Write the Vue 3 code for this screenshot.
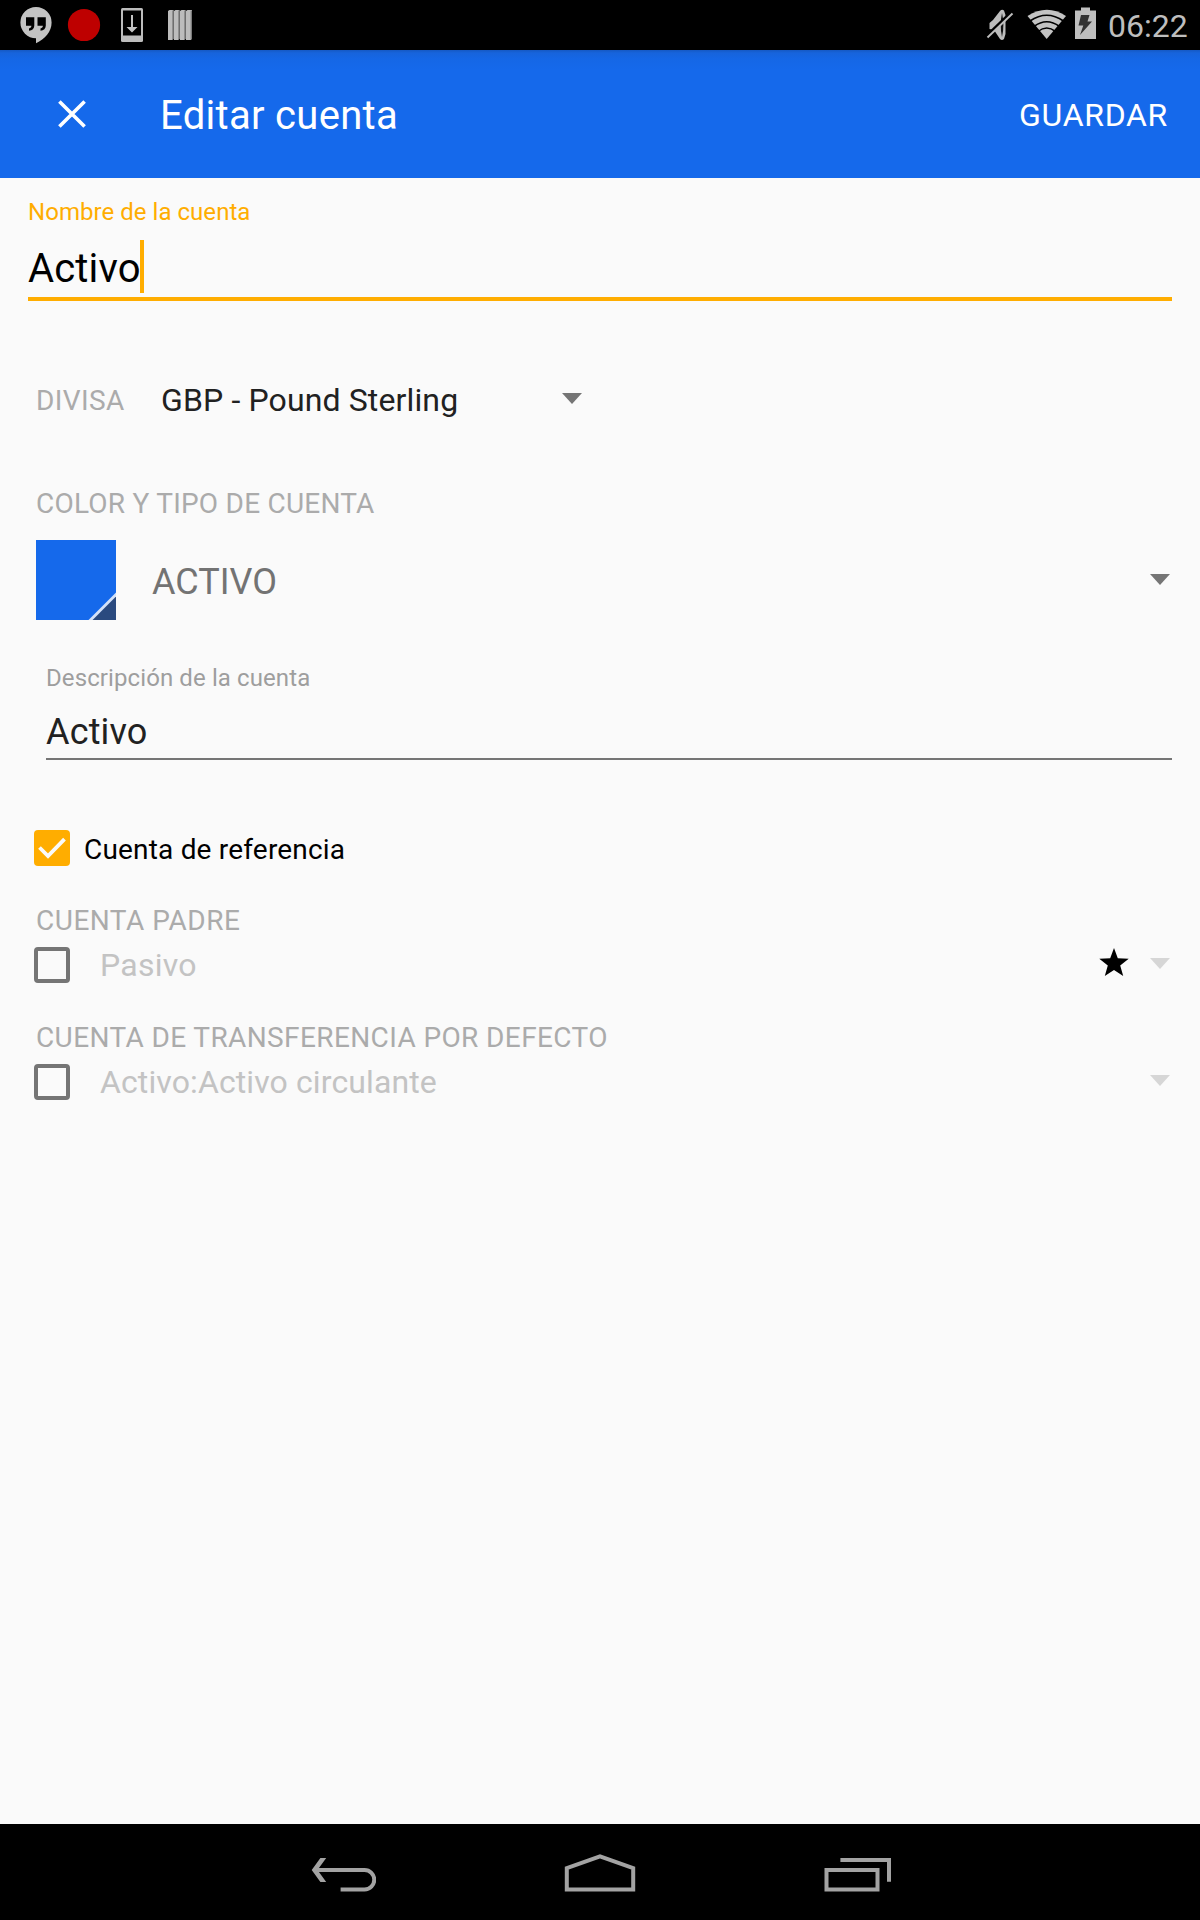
<script setup>
import { ref } from 'vue'

const accountName = ref('Activo')
const description = ref('Activo')
const currency = ref('GBP - Pound Sterling')
const accountType = ref('ACTIVO')
const parentAccount = ref('Pasivo')
const transferAccount = ref('Activo:Activo circulante')
</script>

<template>
  <div class="screen">
    <div class="status">
      <svg class="left-icons" width="200" height="50" viewBox="0 0 200 50">
        <!-- chat bubble with quotes -->
        <path d="M36 7a15.6 15.6 0 0 0 0 31.200v5C45 39 51.600 32 51.600 22.600A15.600 15.600 0 0 0 36 7z" fill="#c3c3c3" />
        <path d="M26 17.300h8.300v8.200c0 3-2 5-5.300 5.300v-2.400c1.600-.3 2.300-1.200 2.400-2.600H26zM37.500 17.300h8.300v8.200c0 3-2 5-5.300 5.300v-2.400c1.600-.3 2.300-1.200 2.400-2.600h-5.400z" fill="#000" />
        <circle cx="84" cy="25" r="16.100" fill="#be0000" />
        <!-- device download -->
        <rect x="121" y="8" width="22" height="34" rx="1.500" fill="#bdbdbd" />
        <rect x="123" y="10.500" width="18" height="25" fill="#000" />
        <path d="M131 15h2v12h4.500L132 32.500 126.500 27h4.500z" fill="#c3c3c3" />
        <!-- striped bars -->
        <g>
          <path d="M168 11l1.500-1h4v29l-1.500 1h-4zM174 11l1.500-1h4v29l-1.500 1h-4zM180 11l1.500-1h4v29l-1.500 1h-4zM186 11l1.500-1h4.500v29l-1.500 1H186z" fill="#bcbcbc" />
          <path d="M173 10.500V39M179 10.500V39M185 10.500V39M191.300 10.500V39" stroke="#777" stroke-width="1.300" />
        </g>
      </svg>
      <div class="right">
        <svg width="116" height="50" viewBox="984 0 116 50">
          <!-- muted speaker -->
          <path d="M989.500 23l3.500-3 7-9q2-2 4-.5l1.500 4.500v19l-1.500 5q-2 2-4 0l-6-9-4.500-1z" fill="#bdbdbd" />
          <path d="M1002 13q-2.600 12 0 24 2.800-12 0-24z" fill="#111" />
          <path d="M987 35.500L1012 11.500" stroke="#000" stroke-width="3" />
          <path d="M987.500 37.500L1012.500 13.500" stroke="#bdbdbd" stroke-width="1.900" />
          <!-- wifi -->
          <path d="M1027.500 16Q1047 3.500 1066 16L1046.700 39z" fill="#c3c3c3" />
          <path d="M1030 21Q1046.700 9.500 1063.500 21M1034 26.500Q1046.700 17 1059.500 26.500M1038 31.500Q1046.700 24.500 1055.500 31.500" fill="none" stroke="#000" stroke-width="1.600" />
          <!-- charging battery -->
          <path d="M1075 10.500h6v-3h9v3h6V39h-21z" fill="#bfbfbf" />
          <path d="M1081 15h8.500l-2 6.500h4.500L1080 35l3.300-9.500h-4.800z" fill="#333" />
        </svg>
        <span class="clock">06:22</span>
      </div>
    </div>

    <header class="toolbar">
      <svg class="close" width="28" height="28" viewBox="0 0 28 28">
        <path d="M1.400 1.400l25.200 25.200M26.600 1.400L1.400 26.600" stroke="#fff" stroke-width="3.600" />
      </svg>
      <h1>Editar cuenta</h1>
      <span class="save">GUARDAR</span>
    </header>

    <main class="form">
      <label class="float-label active">Nombre de la cuenta</label>
      <div class="name-input"><span class="name">{{ accountName }}</span><i class="cursor"></i></div>

      <div class="currency">
        <span class="caption c-divisa">DIVISA</span>
        <span class="currency-value">{{ currency }}</span>
        <svg class="arrow" width="20" height="11" viewBox="0 0 20 11"><path d="M0 0h20L10 11z" /></svg>
      </div>

      <div class="caption c-color">COLOR Y TIPO DE CUENTA</div>
      <div class="type-row">
        <svg width="80" height="80" viewBox="0 0 80 80">
          <path d="M0 0h80v80H0z" fill="#1569eb" />
          <path d="M80 55.500V80H55.500z" fill="#2a4a7f" />
          <path d="M81 53.500L53.500 81" stroke="#d4e2f8" stroke-width="2.900" />
        </svg>
        <span class="type">{{ accountType }}</span>
        <svg class="arrow" width="20" height="11" viewBox="0 0 20 11"><path d="M0 0h20L10 11z" /></svg>
      </div>

      <div class="description">
        <label class="float-label">Descripción de la cuenta</label>
        <div class="description-input"><span>{{ description }}</span></div>
      </div>

      <div class="check-row placeholder">
        <svg width="36" height="36" viewBox="0 0 36 36">
          <rect width="36" height="36" rx="4" fill="#ffad00" />
          <path d="M5.500 17.500l8.500 8.500L30.500 9.200" fill="none" stroke="#fafafa" stroke-width="3.800" />
        </svg>
        <span class="check-label">Cuenta de referencia</span>
      </div>

      <div class="caption c-parent">CUENTA PADRE</div>
      <div class="check-row">
        <span class="box"></span>
        <span class="option o-parent">{{ parentAccount }}</span>
        <svg class="star" width="30" height="28" viewBox="0 0 30 28">
          <path d="M15 0l3.800 10.200L29.700 10.700l-8.500 6.800 3 10.500L15 22l-9.200 6 3-10.500L.3 10.700l10.900-.5z" />
        </svg>
        <svg class="arrow faded" width="20" height="11" viewBox="0 0 20 11"><path d="M0 0h20L10 11z" /></svg>
      </div>

      <div class="caption c-transfer">CUENTA DE TRANSFERENCIA POR DEFECTO</div>
      <div class="check-row">
        <span class="box"></span>
        <span class="option o-transfer">{{ transferAccount }}</span>
        <svg class="arrow faded" width="20" height="11" viewBox="0 0 20 11"><path d="M0 0h20L10 11z" /></svg>
      </div>
    </main>

    <nav class="navbar">
      <svg width="65" height="40" viewBox="0 0 65 40">
        <path d="M29.600 35.500H53.500a9.750 9.750 0 0 0 0-19.500H4" />
        <path d="M15.200 4H9.400L.7 16l8.700 12h5.800L6.500 16z" class="solid" />
      </svg>
      <svg width="72" height="40" viewBox="0 0 72 40">
        <path d="M2.800 35.500V14.200L36 2.400 69.200 14.200V35.500z" />
      </svg>
      <svg width="68" height="40" viewBox="0 0 68 40">
        <path d="M2.500 16h51v19.500h-51zM16.400 6h48.600V27.700" />
      </svg>
    </nav>
  </div>
</template>

<style>
body {
  margin: 0;
  background: #fafafa;
}
</style>

<style scoped>
.screen {
  width: 1200px;
  height: 1920px;
  display: flex;
  flex-direction: column;
  background: #fafafa;
  font-family: Roboto, "Liberation Sans", sans-serif;
  font-weight: 400;
  white-space: nowrap;
}
svg {
  display: block;
  flex: none;
}
.status {
  height: 50px;
  flex: none;
  background: #000;
  display: flex;
  justify-content: space-between;
}
.right {
  display: flex;
  width: 216px;
}
.clock {
  font-size: 32px;
  line-height: 40px;
  margin: 6px 0 0 8px;
  color: #bebebe;
}
.toolbar {
  height: 128px;
  flex: none;
  box-sizing: border-box;
  padding: 0 32px 0 58px;
  display: flex;
  align-items: center;
  color: #fff;
  background: linear-gradient(#1559c4 0, #1764dc 3px, #1567e6 9px, #1569eb 20px);
}
h1 {
  margin: 4px 0 0 74px;
  flex: 1;
  font-size: 40px;
  line-height: 48px;
  font-weight: 400;
  letter-spacing: 0.3px;
}
.save {
  font-size: 32px;
  line-height: 40px;
  margin-top: 2px;
  letter-spacing: 0.7px;
}
.form {
  flex: 1;
  padding: 20px 28px 0;
}
.float-label {
  display: block;
  font-size: 24px;
  line-height: 28px;
  letter-spacing: 0.1px;
  color: #9e9e9e;
}
.float-label.active {
  color: #ffad00;
  letter-spacing: 0.04px;
}
.name-input {
  display: flex;
  margin-top: 14px;
  height: 57px;
  border-bottom: 4px solid #ffad00;
  color: #000;
}
.name {
  font-size: 40px;
  line-height: 48px;
  margin-top: 5px;
  width: 112px;
  letter-spacing: 0.15px;
}
.cursor {
  width: 4px;
  height: 53px;
  background: #ffad00;
}
.caption {
  font-size: 28px;
  line-height: 32px;
  color: #ababab;
  padding-left: 8px;
}
.currency {
  display: flex;
  align-items: center;
  height: 40px;
  margin-top: 79px;
}
.c-divisa {
  width: 125px;
  padding-top: 1px;
  letter-spacing: 0.4px;
}
.currency-value {
  font-size: 32px;
  line-height: 40px;
  width: 401px;
  color: #212121;
  letter-spacing: 0.13px;
}
.arrow {
  fill: #757575;
  margin: 0 2px 1px auto;
}
.currency .arrow {
  margin: 0 0 3px;
}
.c-color {
  margin-top: 68px;
  letter-spacing: 0.23px;
}
.type-row {
  display: flex;
  align-items: center;
  margin-top: 20px;
  padding-left: 8px;
}
.type {
  font-size: 36px;
  line-height: 44px;
  margin: 4px 0 0 36px;
  color: #737373;
}
.description {
  margin: 44px 0 0 18px;
}
.description-input {
  margin-top: 18px;
  padding-bottom: 4px;
  border-bottom: 2px solid #757575;
  font-size: 36px;
  line-height: 44px;
  color: #212121;
  letter-spacing: 0.15px;
}
.check-row {
  display: flex;
  align-items: center;
  height: 36px;
  margin-top: 10px;
  padding-left: 6px;
}
.check-row.placeholder {
  margin-top: 70px;
}
.check-label {
  font-size: 28px;
  line-height: 32px;
  margin: 4px 0 0 14px;
  color: #000;
  letter-spacing: 0.19px;
}
.c-parent,
.c-transfer {
  margin-top: 39px;
}
.c-parent {
  letter-spacing: 0.5px;
}
.c-transfer {
  letter-spacing: 0.39px;
}
.box {
  box-sizing: border-box;
  width: 36px;
  height: 36px;
  border: 4px solid #757575;
  border-radius: 4px;
}
.option {
  font-size: 32px;
  line-height: 40px;
  margin-left: 30px;
  color: #c3c3c3;
  letter-spacing: 0.11px;
}
.o-parent {
  letter-spacing: 0.25px;
}
.star {
  margin: 0 21px 6px auto;
}
.arrow.faded {
  fill: #d6d6d6;
  margin-bottom: 3px;
}
.star + .arrow {
  margin-left: 0;
}
.navbar {
  height: 96px;
  flex: none;
  box-sizing: border-box;
  padding: 30px 308px 0 311px;
  display: flex;
  justify-content: space-between;
  background: #000;
}
.navbar path {
  fill: none;
  stroke: #a3a3a3;
  stroke-width: 4;
}
.navbar path.solid {
  fill: #a3a3a3;
  stroke: none;
}
</style>
